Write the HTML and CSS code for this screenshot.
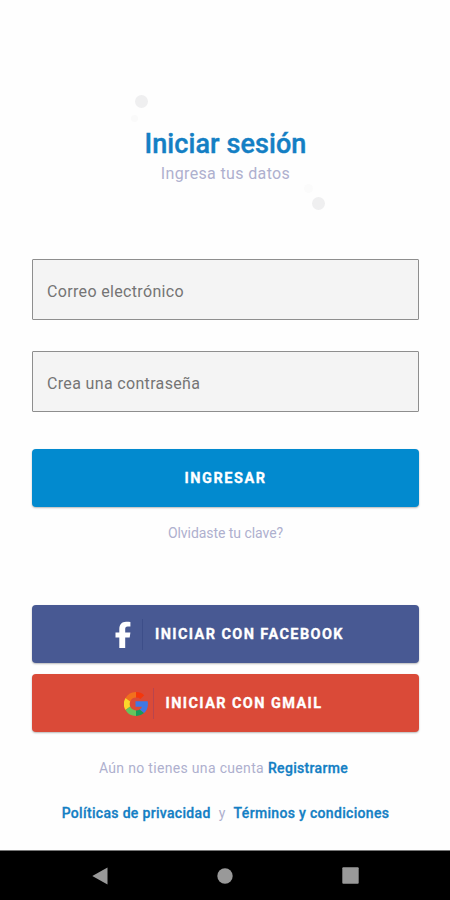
FILE: index.html
```html
<!DOCTYPE html>
<html lang="es">
<head>
<meta charset="utf-8">
<meta name="viewport" content="width=device-width, initial-scale=1">
<title>Iniciar sesión</title>
<link rel="stylesheet" href="styles.css">
</head>
<body>
<main class="screen">
  <header class="intro">
    <span class="dot dot-top"></span>
    <span class="dot dot-top-small"></span>
    <h1 class="title">Iniciar sesión</h1>
    <p class="subtitle">Ingresa tus datos</p>
    <span class="dot dot-bottom-small"></span>
    <span class="dot dot-bottom"></span>
  </header>
  <form class="login">
    <input class="field" type="email" placeholder="Correo electrónico">
    <input class="field" type="password" placeholder="Crea una contraseña">
    <button class="button primary" type="button">INGRESAR</button>
  </form>
  <a class="forgot">Olvidaste tu clave?</a>
  <div class="social">
    <button class="button facebook" type="button">
      <svg class="fb-icon" viewBox="0 0 16 28" width="16" height="28"><path fill="#fff" d="M4.300 27V16.400H.5v-5h3.800V8.100C4.300 3.600 6.900.8 11 .8c1.900 0 3.300.1 4.400.3v4.400h-2.700c-2 0-2.500 1-2.500 2.500v3.400h5.200l-.7 5h-4.500V27z"/></svg>
      <span class="divider"></span>
      <span class="label">INICIAR CON FACEBOOK</span>
    </button>
    <button class="button gmail" type="button">
      <svg class="g-icon" viewBox="0 0 24 24" width="24" height="24"><path fill="#f4370b" d="M12 0c3.300 0 6 1.200 8.200 3.200L16.400 7A6.200 6.200 0 0 0 12 5.600z"/><path fill="#f2701d" d="M12 0v5.600a6.500 6.500 0 0 0-5.800 3.900L1.500 6A12 12 0 0 1 12 0z"/><path fill="#fbd52b" d="M1.500 6l4.700 3.500a6.500 6.500 0 0 0 0 5L1.500 18a12 12 0 0 1 0-12z"/><path fill="#66c45c" d="M1.500 18l4.700-3.500A6.500 6.500 0 0 0 12 18.400V24A12 12 0 0 1 1.500 18z"/><path fill="#159c5b" d="M12 18.400c1.500 0 2.700-.3 3.800-1l4.300 3.700A12 12 0 0 1 12 24z"/><path fill="#3f78e4" d="M11.500 9.300h12.200c.8 5.300-.6 9.200-3.600 11.800l-4.300-3.700a5 5 0 0 0 2.200-2.700h-6.500z"/></svg>
      <span class="divider"></span>
      <span class="label">INICIAR CON GMAIL</span>
    </button>
  </div>
  <p class="signup"><span class="question">Aún no tienes una cuenta</span><a class="link register">Registrarme</a></p>
  <p class="legal"><a class="link policy">Políticas de privacidad</a><span class="and">y</span><a class="link terms">Términos y condiciones</a></p>
</main>
<nav class="system-nav">
  <svg width="16" height="18" viewBox="0 0 16 18"><path fill="#999" d="M15.500.5v17L.3 9z"/></svg>
  <svg width="16" height="16" viewBox="0 0 16 16"><circle cx="8" cy="8" r="7.700" fill="#999"/></svg>
  <svg width="17" height="17" viewBox="0 0 17 17"><rect x=".3" y=".3" width="16.400" height="16.400" rx="1" fill="#999"/></svg>
</nav>
</body>
</html>
```
FILE: styles.css
```css
* { box-sizing: border-box; }
body {
  margin: 0;
  height: 900px;
  display: flex;
  flex-direction: column;
  background: #fefefe;
  font-family: Roboto, "Liberation Sans", sans-serif;
  color: #aeb0ce;
}
.screen {
  flex: 1;
  display: flex;
  flex-direction: column;
  padding: 128px 31px 0 32px;
}
.intro {
  position: relative;
  height: 131px;
  text-align: center;
}
.title {
  margin: 0;
  font-size: 27px;
  line-height: 32px;
  font-weight: 500;
  letter-spacing: .08px;
  color: #147fc4;
  -webkit-text-stroke: .4px #147fc4;
}
.subtitle {
  margin: 4px 0 0;
  font-size: 16px;
  line-height: 20px;
  letter-spacing: .36px;
}
.dot { position: absolute; border-radius: 50%; background: #efeff0; }
.dot-top { width: 13px; height: 13px; left: 103px; top: -33px; }
.dot-bottom { width: 13px; height: 13px; left: 280px; top: 69px; }
.dot-top-small { width: 7px; height: 7px; left: 99px; top: -13px; background: #fafafa; }
.dot-bottom-small { width: 9px; height: 9px; left: 272px; top: 56px; background: #fbfbfb; }
.login { display: flex; flex-direction: column; }
.field {
  width: 100%;
  height: 61px;
  margin: 0 0 31px;
  padding: 4px 14px 0;
  border: 1px solid #8e8e8e;
  border-radius: 1px;
  background: #f4f4f4;
  font: 400 16px Roboto, "Liberation Sans", sans-serif;
  letter-spacing: .34px;
}
.field::placeholder { color: #757575; opacity: 1; }
.button {
  display: flex;
  align-items: center;
  justify-content: center;
  width: 100%;
  height: 58px;
  padding: 1px 0 0;
  border: 0;
  border-radius: 4px;
  color: #fff;
  font: 700 14.500px Roboto, "Liberation Sans", sans-serif;
  letter-spacing: 1.400px;
  -webkit-text-stroke: .3px #fff;
  box-shadow: 0 1px 2px rgba(0, 0, 0, .28);
}
.primary { margin-top: 6px; background: #028acf; letter-spacing: 1.550px; }
.forgot { margin-top: 17px; text-align: center; font-size: 14px; line-height: 18px; letter-spacing: -.05px; }
.social { display: flex; flex-direction: column; gap: 11px; margin-top: 63px; }
.facebook { padding-left: 8px; background: #485993; }
.gmail { padding-right: 5px; background: #da4a38; }
.divider { width: 1px; height: 31px; margin: 0 12px 0 11px; background: #3d4e89; }
.gmail .divider { margin-left: 5px; background: #b9454d; }
.signup, .legal {
  display: flex;
  justify-content: center;
  margin: 0;
  font-size: 14px;
  line-height: 18px;
  letter-spacing: .32px;
}
.signup { margin-top: 27px; padding-right: 4px; gap: 4px; }
.legal { margin-top: 27px; gap: 8px; }
.link { font-weight: 500; color: #147fc4; -webkit-text-stroke: .3px #147fc4; }
.system-nav {
  height: 50px;
  display: grid;
  grid-template-columns: repeat(3, 125.500px);
  justify-content: center;
  justify-items: center;
  align-items: center;
  background: #000;
  border-top: 1px solid #777;
}
```
